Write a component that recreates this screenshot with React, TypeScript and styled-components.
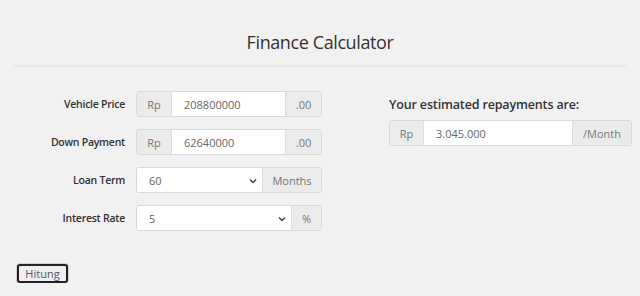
import React, { useState } from 'react'
import styled, { createGlobalStyle } from 'styled-components'

const GlobalStyle = createGlobalStyle`
  body {
    margin: 0;
    background: #f1f1f1;
    font-family: "Open Sans", "Liberation Sans", sans-serif;
    color: #333;
  }
`

const Page = styled.div`
  padding: 0 14px;
`

const Title = styled.h3`
  margin: 0;
  padding: 30px 0 11px;
  text-align: center;
  font-size: 18px;
  font-weight: 500;
  letter-spacing: -0.4px;
  line-height: 24px;
  color: #333;
  border-bottom: 2px solid #e7e7e7;
`

const Body = styled.div`
  display: grid;
  grid-template-columns: 308px 243px;
  column-gap: 67px;
  padding-top: 24px;
`

const Form = styled.div`
  display: flex;
  flex-direction: column;
  gap: 12px;
`

const Row = styled.div`
  display: grid;
  grid-template-columns: 111px 186px;
  column-gap: 11px;
  align-items: center;
`

const Label = styled.label`
  text-align: right;
  font-size: 10.5px;
  font-weight: 600;
  letter-spacing: -0.25px;
  color: #333;
`

const Group = styled.div`
  display: flex;
  height: 26px;
  box-sizing: border-box;
  border: 1px solid #d9d9d9;
  border-radius: 3px;
  overflow: hidden;
  background: #fff;
`

const Addon = styled.span<{ $w: number }>`
  flex: 0 0 ${p => p.$w}px;
  display: flex;
  align-items: center;
  justify-content: center;
  background: #ebebeb;
  color: #777;
  font-size: 11px;
  border-left: 1px solid #dedede;
  &:first-child {
    border-left: none;
    border-right: 1px solid #dedede;
  }
`

const Input = styled.input`
  flex: 1;
  min-width: 0;
  border: none;
  outline: none;
  padding: 0 12px;
  font: inherit;
  font-size: 11px;
  color: #666;
  background: #fff;
`

const SelectWrap = styled.div`
  flex: 1;
  position: relative;
  display: flex;
`

const Select = styled.select`
  flex: 1;
  appearance: none;
  border: none;
  outline: none;
  background: #fff;
  padding: 0 12px;
  font: inherit;
  font-size: 11px;
  color: #666;
`

const Chevron = styled.svg`
  position: absolute;
  right: 5px;
  top: 10px;
  pointer-events: none;
`

const Submit = styled.button`
  margin: 33px 0 0 3px;
  width: 51px;
  height: 19px;
  padding: 0;
  box-sizing: border-box;
  font: inherit;
  font-size: 11px;
  color: #556;
  background: #efefef;
  border: 2px solid #222;
  border-radius: 3px;
  box-shadow: 0 0 0 1px #cfcfcf;
`

const Result = styled.div`
  display: flex;
  flex-direction: column;
  gap: 6px;
  padding-top: 5px;
`

const ResultTitle = styled.div`
  font-size: 12.5px;
  font-weight: 600;
  letter-spacing: -0.15px;
  color: #333;
  line-height: 18px;
`

const ChevronIcon = () => (
  <Chevron width="8" height="6" viewBox="0 0 8 6">
    <path d="M1 1.5 L4 4.5 L7 1.5" fill="none" stroke="#444" strokeWidth="1.5" />
  </Chevron>
)

export default function App() {
  const [price, setPrice] = useState('208800000')
  const [down, setDown] = useState('62640000')
  const [term, setTerm] = useState('60')
  const [rate, setRate] = useState('5')

  return (
    <Page>
      <GlobalStyle />
      <Title>Finance Calculator</Title>
      <Body>
        <div>
          <Form>
            <Row>
              <Label>Vehicle Price</Label>
              <Group>
                <Addon $w={34}>Rp</Addon>
                <Input value={price} onChange={e => setPrice(e.target.value)} />
                <Addon $w={35}>.00</Addon>
              </Group>
            </Row>
            <Row>
              <Label>Down Payment</Label>
              <Group>
                <Addon $w={34}>Rp</Addon>
                <Input value={down} onChange={e => setDown(e.target.value)} />
                <Addon $w={35}>.00</Addon>
              </Group>
            </Row>
            <Row>
              <Label>Loan Term</Label>
              <Group>
                <SelectWrap>
                  <Select value={term} onChange={e => setTerm(e.target.value)}>
                    {['12', '24', '36', '48', '60'].map(v => (
                      <option key={v}>{v}</option>
                    ))}
                  </Select>
                  <ChevronIcon />
                </SelectWrap>
                <Addon $w={58}>Months</Addon>
              </Group>
            </Row>
            <Row>
              <Label>Interest Rate</Label>
              <Group>
                <SelectWrap>
                  <Select value={rate} onChange={e => setRate(e.target.value)}>
                    {['3', '4', '5', '6', '7'].map(v => (
                      <option key={v}>{v}</option>
                    ))}
                  </Select>
                  <ChevronIcon />
                </SelectWrap>
                <Addon $w={29}>%</Addon>
              </Group>
            </Row>
          </Form>
          <Submit>Hitung</Submit>
        </div>
        <Result>
          <ResultTitle>Your estimated repayments are:</ResultTitle>
          <Group>
            <Addon $w={33}>Rp</Addon>
            <Input readOnly value="3.045.000" />
            <Addon $w={58}>/Month</Addon>
          </Group>
        </Result>
      </Body>
    </Page>
  )
}
